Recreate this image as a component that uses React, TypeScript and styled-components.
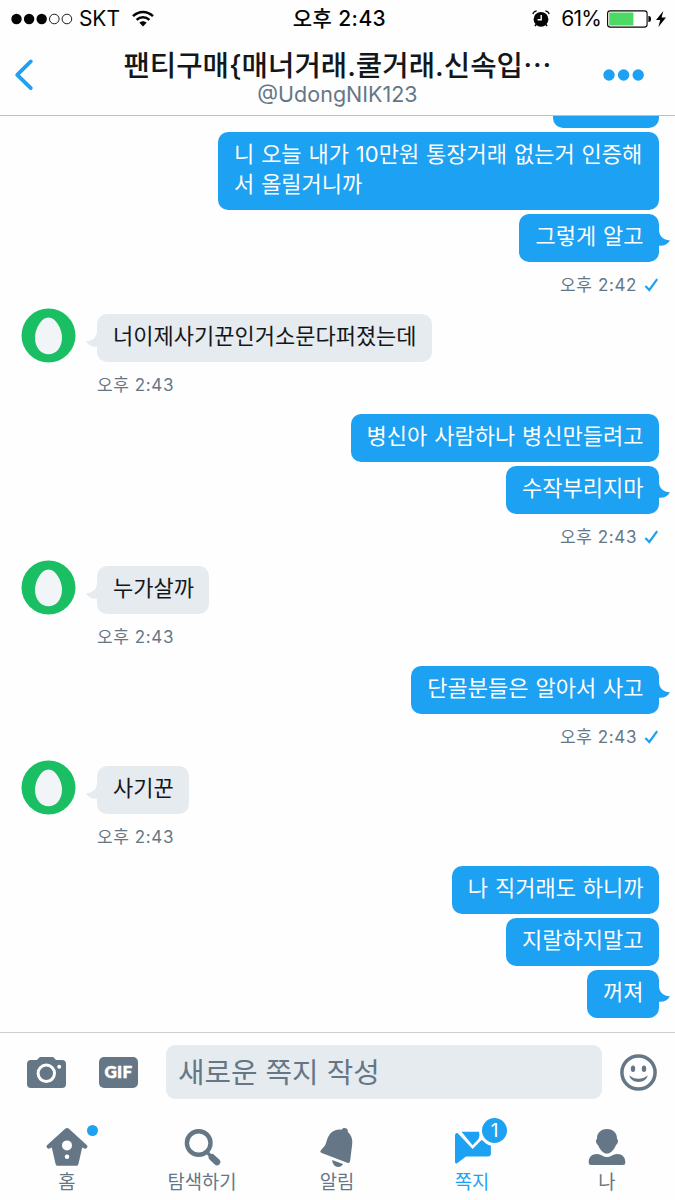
import React from "react";
import styled, { createGlobalStyle } from "styled-components";

const color = {
  blue: "#1da1f2",
  slate: "#657786",
  pale: "#e6ebf0",
  ink: "#14171a",
  green: "#1bbf63",
};

const GlobalStyle = createGlobalStyle`
  * { box-sizing: border-box; }
  body {
    margin: 0;
    background: #fff;
    font-family: Inter, "Noto Sans CJK KR", sans-serif;
    color: ${color.ink};
  }
  svg { display: block; overflow: visible; flex: none; }
`;

const Screen = styled.div`
  width: 675px;
  height: 1200px;
  display: flex;
  flex-direction: column;
  overflow: hidden;
  background: #fefefe;
`;

const StatusBar = styled.div`
  height: 37px;
  flex: none;
  display: grid;
  grid-template-columns: 1fr auto 1fr;
  align-items: center;
  padding: 0 9px 0 11px;
  font-size: 21px;
  line-height: 37px;
  color: #050505;
`;

const StatusSide = styled.div<{ $end?: boolean }>`
  display: flex;
  align-items: center;
  justify-content: ${(p) => (p.$end ? "flex-end" : "flex-start")};
`;

const Carrier = styled.span`
  margin: 0 12px 0 7px;
  letter-spacing: -0.1px;
`;

const Clock = styled.span`
  font-weight: 500;
  padding-left: 2px;
  letter-spacing: 0.4px;
`;

const Percent = styled.span`
  margin: 0 6px 0 11px;
  letter-spacing: -0.8px;
`;

const Header = styled.header`
  height: 79px;
  flex: none;
  display: grid;
  grid-template-columns: 62px 1fr 62px;
  align-items: center;
  border-bottom: 1px solid #b4c0ca;
`;

const HeaderButton = styled.div<{ $end?: boolean }>`
  display: flex;
  justify-content: ${(p) => (p.$end ? "flex-end" : "flex-start")};
  padding: ${(p) => (p.$end ? "0 31px 3px 0" : "0 0 3px 14px")};
`;

const Titles = styled.div`
  display: flex;
  flex-direction: column;
  align-items: center;
  padding-top: 5px;
  white-space: nowrap;
`;

const Title = styled.h1`
  margin: 0;
  font-size: 28.7px;
  line-height: 40px;
  height: 34px;
  font-weight: 500;
`;

const Handle = styled.div`
  font-size: 21.5px;
  line-height: 28px;
  margin-bottom: 4px;
  color: ${color.slate};
`;

const Conversation = styled.main`
  flex: 1;
  min-height: 0;
  overflow: hidden;
  display: flex;
  flex-direction: column;
  justify-content: flex-end;
  padding: 0 16px 14px 21px;
`;

const Group = styled.section<{ $mine?: boolean }>`
  flex: none;
  display: flex;
  gap: 22px;
  justify-content: ${(p) => (p.$mine ? "flex-end" : "flex-start")};
`;

const AvatarSlot = styled.div`
  height: 48px;
  width: 54px;
  display: flex;
  align-items: flex-end;
`;

const Stack = styled.div<{ $mine?: boolean }>`
  display: flex;
  flex-direction: column;
  gap: 4px;
  align-items: ${(p) => (p.$mine ? "flex-end" : "flex-start")};
`;

const Bubble = styled.div<{ $mine?: boolean }>`
  position: relative;
  max-width: 441px;
  min-height: 48px;
  padding: 7px 15.5px 11px 16px;
  border-radius: 10px;
  font-size: 22px;
  line-height: 30px;
  word-spacing: 0.7px;
  word-break: break-all;
  background: ${(p) => (p.$mine ? color.blue : color.pale)};
  color: ${(p) => (p.$mine ? "#fff" : color.ink)};
`;

const ClippedBubble = styled(Bubble)`
  width: 106px;
`;

const Tail = styled.svg<{ $mine?: boolean }>`
  position: absolute;
  top: ${(p) => (p.$mine ? 15 : 16)}px;
  ${(p) => (p.$mine ? "right: -11px;" : "left: -11px; transform: scaleX(-1);")}
`;

const Meta = styled.div`
  height: 48px;
  display: flex;
  align-items: center;
  gap: 7px;
  padding: 0 0 13px 0;
  font-size: 17px;
  letter-spacing: 0.6px;
  color: ${color.slate};
`;

const CheckSvg = styled.svg`
  margin-top: 3px;
`;

const Composer = styled.div`
  flex: none;
  height: 80px;
  display: flex;
  align-items: center;
  border-top: 1px solid #c9ced2;
  padding: 0 18px 1px 27px;
`;

const Field = styled.div`
  width: 436px;
  height: 54px;
  margin: 0 18px 0 28px;
  padding: 1px 0 0 12px;
  border-radius: 9px;
  background: ${color.pale};
  color: ${color.slate};
  font-size: 28.8px;
  line-height: 53px;
`;

const GifBadge = styled.div`
  width: 39px;
  height: 31px;
  margin-left: 33px;
  border-radius: 5px;
  background: ${color.slate};
  color: #fff;
  font-family: Lato, sans-serif;
  font-size: 17px;
  letter-spacing: 0.3px;
  font-weight: 900;
  -webkit-text-stroke: 0.5px #fff;
  line-height: 30px;
  text-align: center;
`;

const TabBar = styled.nav`
  flex: none;
  height: 88px;
  display: grid;
  grid-template-columns: repeat(5, 135px);
`;

const Tab = styled.div<{ $active?: boolean }>`
  display: flex;
  flex-direction: column;
  align-items: center;
  gap: 2px;
  padding: 14px 1px 0 0;
  font-size: 18.8px;
  line-height: 26px;
  color: ${(p) => (p.$active ? color.blue : color.slate)};
`;

const TabIcon = styled.div`
  position: relative;
  width: 42px;
  height: 42px;
`;

const Dot = styled.span`
  position: absolute;
  left: 41px;
  top: -1px;
  width: 11px;
  height: 11px;
  border-radius: 50%;
  background: ${color.blue};
`;

const Count = styled.span`
  position: absolute;
  left: 28px;
  top: -11px;
  width: 31px;
  height: 31px;
  border: 3px solid #fefefe;
  border-radius: 50%;
  background: ${color.blue};
  color: #fff;
  font-size: 19px;
  line-height: 25px;
  text-align: center;
`;

const SignalDots = () => (
  <svg width="61" height="12" viewBox="0 0 61 12">
    {[0, 1, 2, 3, 4].map((i) => (
      <circle
        key={i}
        cx={5.5 + i * 12.6}
        cy="6"
        r={i < 3 ? 5.2 : 4.8}
        fill={i < 3 ? "#050505" : "none"}
        stroke="#050505"
        strokeWidth={i < 3 ? 0 : 0.9}
      />
    ))}
  </svg>
);

const Wifi = () => (
  <svg width="22" height="16" viewBox="0 0 22 16" fill="none" stroke="#050505" strokeWidth="2.5">
    <path d="M1 5.2C6.8-.4 15.2-.4 21 5.2" />
    <path d="M4.6 8.9C8.3 5.4 13.7 5.4 17.4 8.9" />
    <path d="M7.4 11.8C9.5 9.8 12.5 9.8 14.6 11.8L11 15.6Z" fill="#050505" stroke="none" />
  </svg>
);

const Alarm = () => (
  <svg width="18" height="18" viewBox="0 0 18 18">
    <circle cx="9" cy="9.3" r="7.4" fill="#050505" />
    <path d="M4 14.5L3 16M14 14.500L15 16" stroke="#050505" strokeWidth="1.6" />
    <path d="M.8 4.200C1.200 2.600 2.600 1.300 4.600.9M17.200 4.200C16.800 2.600 15.400 1.300 13.400.9" stroke="#050505" strokeWidth="1.1" fill="none" />
    <path d="M9.2 5V9.8H5.6" stroke="#fff" strokeWidth="1.4" fill="none" />
  </svg>
);

const Battery = () => (
  <svg width="44" height="18" viewBox="0 0 44 18">
    <rect x=".6" y=".9" width="39.5" height="16.2" rx="2.6" fill="#fff" stroke="#050505" strokeWidth="1.1" />
    <rect x="2.2" y="2.5" width="24.2" height="13" rx=".8" fill="#4cd964" />
    <path d="M41.4 6C43.6 6 44 7.2 44 9S43.6 12 41.4 12Z" fill="#050505" />
  </svg>
);

const BoltSvg = styled.svg`
  margin-left: 5px;
`;

const Bolt = () => (
  <BoltSvg width="10" height="16" viewBox="0 0 10 16">
    <path d="M7.3 0L0 9H4.2L2.4 16L10 6.5H5.6Z" fill="#050505" />
  </BoltSvg>
);

const BackIcon = () => (
  <svg width="19" height="32" viewBox="0 0 19 32" fill="none" stroke={color.blue} strokeWidth="3.8" strokeLinecap="round" strokeLinejoin="round">
    <path d="M16.8 2.4L3.2 15.8L16.8 29.2" />
  </svg>
);

const MoreIcon = () => (
  <svg width="41" height="12" viewBox="0 0 41 12" fill={color.blue}>
    <circle cx="6" cy="6" r="5.7" />
    <circle cx="20.6" cy="6" r="5.7" />
    <circle cx="35.2" cy="6" r="5.7" />
  </svg>
);

const Egg = () => (
  <svg width="55" height="54" viewBox="0 0 55 54">
    <circle cx="27.5" cy="27.5" r="27" fill={color.green} />
    <path d="M27.5 9.500C34.500 9.500 41 20.500 41 29.800C41 39.800 35 46.300 27.500 46.300S14 39.800 14 29.800C14 20.500 20.500 9.500 27.500 9.500Z" fill="#f2f5f8" />
  </svg>
);

const BubbleTail = ({ mine }: { mine?: boolean }) => (
  <Tail $mine={mine} width="12" height="18" viewBox="0 0 12 18">
    <path d="M0 2H1C1.600 7 5 10.900 12 11.400C9.500 15.200 6 17.200 1 16.800H0Z" fill={mine ? color.blue : color.pale} />
  </Tail>
);

const Check = () => (
  <CheckSvg width="15" height="14" viewBox="0 0 15 14" fill="none" stroke={color.blue} strokeWidth="2.2">
    <path d="M1.400 8L5.300 12L13.200 1.200" />
  </CheckSvg>
);

const Camera = () => (
  <svg width="39" height="31" viewBox="0 0 39 31">
    <path d="M4 3H10L12 .7Q12.600 0 13.500 0H25.500Q26.400 0 27 .7L29 3H35Q39 3 39 7V27Q39 31 35 31H4Q0 31 0 27V7Q0 3 4 3Z" fill={color.slate} />
    <circle cx="19.300" cy="16.300" r="8.200" fill="none" stroke="#fff" strokeWidth="3" />
    <circle cx="32.200" cy="9.700" r="2" fill="#fff" />
  </svg>
);

const Smiley = () => (
  <svg width="37" height="37" viewBox="0 0 37 37" fill={color.slate}>
    <circle cx="18.500" cy="18.500" r="16.600" fill="none" stroke={color.slate} strokeWidth="3.500" />
    <ellipse cx="13" cy="14.800" rx="2.200" ry="3.200" />
    <ellipse cx="24" cy="14.800" rx="2.200" ry="3.200" />
    <path d="M9.300 21.300C14.500 26 22.500 26 27.700 21.300C26.800 25.700 23 28 18.500 28S10.200 25.700 9.300 21.300Z" />
  </svg>
);

const HomeIcon = () => (
  <svg width="42" height="42" viewBox="0 0 42 42">
    <path
      fill={color.slate}
      fillRule="evenodd"
      d="M19.400 2.600Q21 1.200 22.600 2.600L41 19.300Q42 20.600 41 21.800Q40 23 38.300 22.500L36.200 21.600L32.300 38.500Q31.900 39.800 30.400 39.800H11.600Q10.100 39.800 9.700 38.500L5.800 21.600L3.700 22.500Q2 23 1 21.800Q0 20.600 1 19.300ZM21 14.400A5 5 0 1 0 21 24.400A5 5 0 1 0 21 14.400ZM21 28.500A2.300 2.300 0 1 0 21 33.100A2.300 2.300 0 1 0 21 28.500Z"
    />
  </svg>
);

const SearchIcon = () => (
  <svg width="42" height="42" viewBox="0 0 42 42" fill="none" stroke={color.slate} strokeLinecap="round">
    <circle cx="17.700" cy="17" r="11.800" strokeWidth="4.400" />
    <path d="M26.500 26.500L29 29.500" strokeWidth="3.500" />
    <path d="M31 31.300L36 36" strokeWidth="6.600" />
  </svg>
);

const BellIcon = () => (
  <svg width="42" height="42" viewBox="0 0 42 42" fill={color.slate}>
    <path d="M25.800 3.800C26.300 1.400 31 1.200 31.800 4.400L31.900 6C35.200 9 37 13.500 36.100 19L34.100 35Q33.700 37.600 31.200 36.700L5.200 26.800Q3.400 25.800 4.900 24.200L9 19.500C10.800 16.500 10.900 10 16 6C18.700 3.900 22.500 3 25.800 3.800Z" />
    <path d="M16.200 34L27 38C25.700 40.400 23.500 41.500 20.800 40.800C18 40 16.200 37.400 16.200 34Z" />
  </svg>
);

const MessageIcon = () => (
  <svg width="42" height="42" viewBox="0 0 42 42" fill={color.blue}>
    <path d="M10.500 5.800H29.500L27.500 13L21.600 19.300Z" />
    <path d="M4 9.500Q4 6.500 6.500 7L21.600 23L30.500 14L39.900 18V27.500Q39.900 30.500 36.900 30.500H15L6.400 37.100Q4 38.600 4 35.800Z" />
  </svg>
);

const PersonIcon = () => (
  <svg width="42" height="42" viewBox="0 0 42 42" fill={color.slate}>
    <path d="M21 3C27.500 3 31.400 7.500 31 13C33 13.800 31.800 18 30 19C28.500 23 25 27.600 21 27.600S13.500 23 12 19C10.200 18 9 13.800 11 13C10.600 7.500 14.500 3 21 3Z" />
    <path d="M11 28Q14 28 16 29.500Q21 32.500 26 29.500Q28 28 31 28C36.500 28 39.300 31 39.300 36.500Q39.300 39 36.800 39H5.200Q2.700 39 2.700 36.500C2.700 31 5.500 28 11 28Z" />
  </svg>
);

const Timestamp = ({ time, sent }: { time: string; sent?: boolean }) => (
  <Meta>
    <span>{time}</span>
    {sent && <Check />}
  </Meta>
);

const Outgoing = ({ lines, time, children }: { lines: string[]; time?: string; children?: React.ReactNode }) => (
  <Group $mine>
    <Stack $mine>
      {children}
      {lines.map((line, i) => (
        <Bubble $mine key={line}>
          {line}
          {i === lines.length - 1 && <BubbleTail mine />}
        </Bubble>
      ))}
      {time && <Timestamp time={time} sent />}
    </Stack>
  </Group>
);

const Incoming = ({ text, time }: { text: string; time: string }) => (
  <Group>
    <AvatarSlot>
      <Egg />
    </AvatarSlot>
    <Stack>
      <Bubble>
        {text}
        <BubbleTail />
      </Bubble>
      <Timestamp time={time} />
    </Stack>
  </Group>
);

export default function App() {
  return (
    <Screen>
      <GlobalStyle />
      <StatusBar>
        <StatusSide>
          <SignalDots />
          <Carrier>SKT</Carrier>
          <Wifi />
        </StatusSide>
        <Clock>오후 2:43</Clock>
        <StatusSide $end>
          <Alarm />
          <Percent>61%</Percent>
          <Battery />
          <Bolt />
        </StatusSide>
      </StatusBar>
      <Header>
        <HeaderButton>
          <BackIcon />
        </HeaderButton>
        <Titles>
          <Title>팬티구매{"{"}매너거래.쿨거래.신속입⋯</Title>
          <Handle>@UdongNIK123</Handle>
        </Titles>
        <HeaderButton $end>
          <MoreIcon />
        </HeaderButton>
      </Header>
      <Conversation>
        <Outgoing lines={["니 오늘 내가 10만원 통장거래 없는거 인증해서 올릴거니까", "그렇게 알고"]} time="오후 2:42">
          <ClippedBubble $mine />
        </Outgoing>
        <Incoming text="너이제사기꾼인거소문다퍼졌는데" time="오후 2:43" />
        <Outgoing lines={["병신아 사람하나 병신만들려고", "수작부리지마"]} time="오후 2:43" />
        <Incoming text="누가살까" time="오후 2:43" />
        <Outgoing lines={["단골분들은 알아서 사고"]} time="오후 2:43" />
        <Incoming text="사기꾼" time="오후 2:43" />
        <Outgoing lines={["나 직거래도 하니까", "지랄하지말고", "꺼져"]} />
      </Conversation>
      <Composer>
        <Camera />
        <GifBadge>GIF</GifBadge>
        <Field>새로운 쪽지 작성</Field>
        <Smiley />
      </Composer>
      <TabBar>
        <Tab>
          <TabIcon>
            <HomeIcon />
            <Dot />
          </TabIcon>
          홈
        </Tab>
        <Tab>
          <TabIcon>
            <SearchIcon />
          </TabIcon>
          탐색하기
        </Tab>
        <Tab>
          <TabIcon>
            <BellIcon />
          </TabIcon>
          알림
        </Tab>
        <Tab $active>
          <TabIcon>
            <MessageIcon />
            <Count>1</Count>
          </TabIcon>
          쪽지
        </Tab>
        <Tab>
          <TabIcon>
            <PersonIcon />
          </TabIcon>
          나
        </Tab>
      </TabBar>
    </Screen>
  );
}
